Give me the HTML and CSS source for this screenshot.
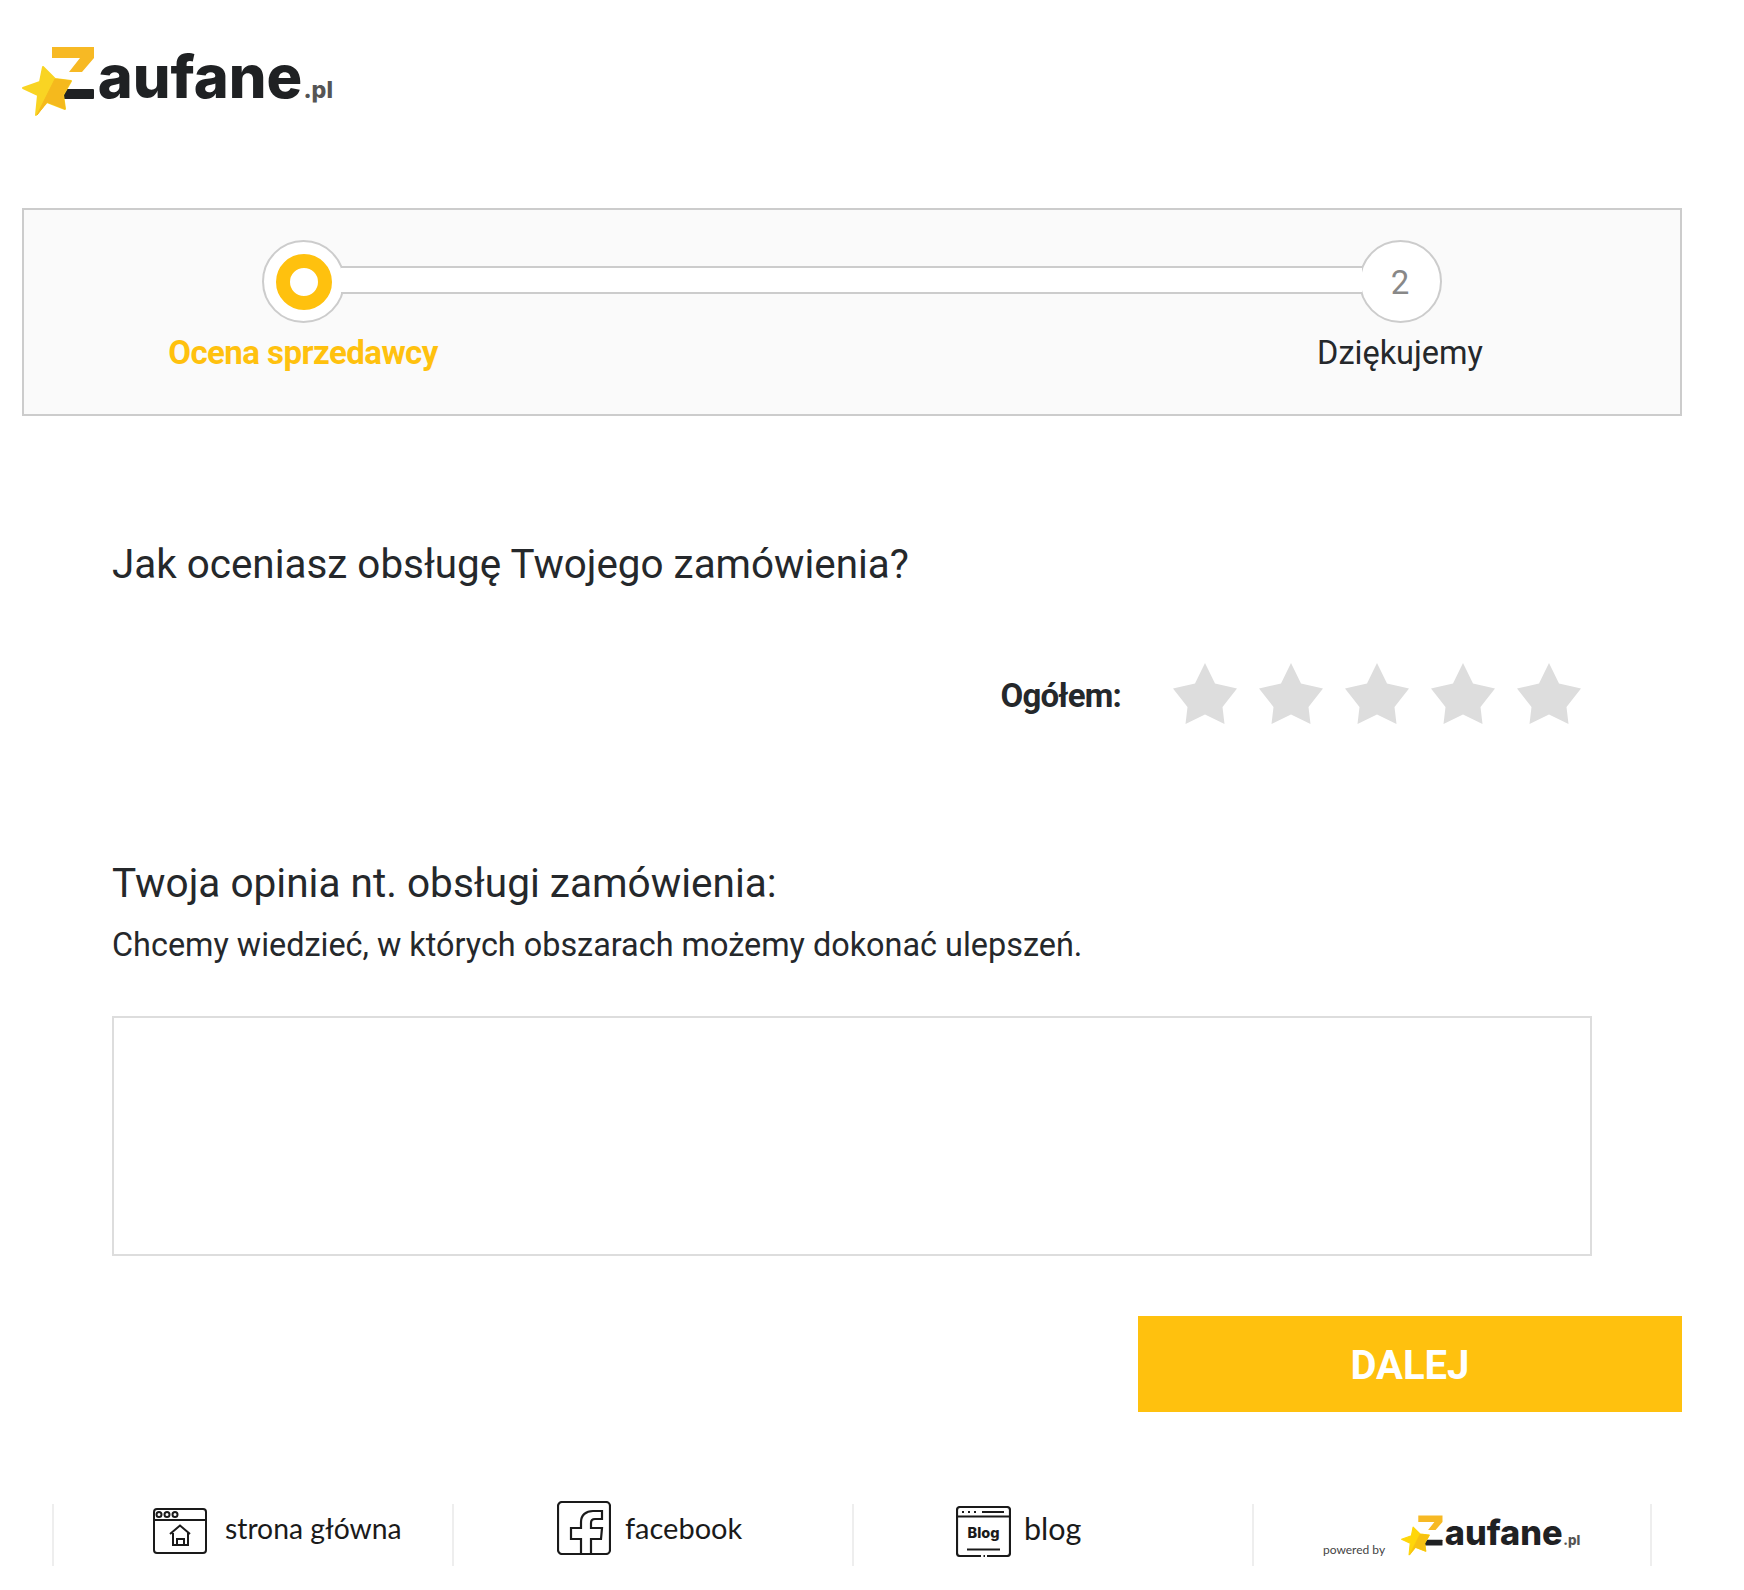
FILE: index.html
```html
<!DOCTYPE html>
<html lang="pl">
<head>
<meta charset="utf-8">
<title>Zaufane.pl</title>
<link rel="stylesheet" href="styles.css">
</head>
<body>
<div class="page">
  <header class="header">
    <a class="logo">
      <svg class="logo-mark" viewBox="0 0 74 71"><polygon fill="#f7b924" points="30,1 72,1 72,12 60,26 47,26 58,12 30,12"/><rect fill="#1f2123" x="41" y="43" width="31" height="10" rx="1"/><polygon fill="#f9d423" stroke="#f9d423" stroke-width="2" stroke-linejoin="round" points="21,21 33,33 49,35 41,49 43,63 25,56 14,69 16,49 1,42 18,36"/><polygon fill="#f5b91d" stroke="#f5b91d" stroke-width="1" stroke-linejoin="round" points="33,33 49,35 41,49 43,63 25,56 15,69"/></svg>
      <span class="logo-text">aufane<span class="logo-tld">.pl</span></span>
    </a>
  </header>

  <section class="steps">
    <div class="steps-track"></div>
    <div class="step step-active">
      <div class="step-circle"><span class="step-ring"></span></div>
      <div class="step-label">Ocena sprzedawcy</div>
    </div>
    <div class="step">
      <div class="step-circle"><span class="step-num">2</span></div>
      <div class="step-label">Dziękujemy</div>
    </div>
  </section>

  <main class="form">
    <h2 class="question">Jak oceniasz obsługę Twojego zamówienia?</h2>
    <div class="rating">
      <span class="rating-label">Ogółem:</span>
      <div class="stars">
        <svg class="star" viewBox="0 0 64 61"><polygon points="32,0 42,20.500 64,25.500 49.500,44 51.500,61 32,51.500 12.500,61 14.500,44 0,25.500 22,20.500"/></svg>
        <svg class="star" viewBox="0 0 64 61"><polygon points="32,0 42,20.500 64,25.500 49.500,44 51.500,61 32,51.500 12.500,61 14.500,44 0,25.500 22,20.500"/></svg>
        <svg class="star" viewBox="0 0 64 61"><polygon points="32,0 42,20.500 64,25.500 49.500,44 51.500,61 32,51.500 12.500,61 14.500,44 0,25.500 22,20.500"/></svg>
        <svg class="star" viewBox="0 0 64 61"><polygon points="32,0 42,20.500 64,25.500 49.500,44 51.500,61 32,51.500 12.500,61 14.500,44 0,25.500 22,20.500"/></svg>
        <svg class="star" viewBox="0 0 64 61"><polygon points="32,0 42,20.500 64,25.500 49.500,44 51.500,61 32,51.500 12.500,61 14.500,44 0,25.500 22,20.500"/></svg>
      </div>
    </div>
    <h2 class="question question-opinion">Twoja opinia nt. obsługi zamówienia:</h2>
    <p class="hint">Chcemy wiedzieć, w których obszarach możemy dokonać ulepszeń.</p>
    <textarea class="opinion"></textarea>
  </main>

  <div class="actions"><button class="next">DALEJ</button></div>

  <footer class="footer">
    <a class="foot-item foot-home">
      <svg class="foot-icon icon-home" viewBox="0 0 54 46" fill="none" stroke="#1a1a1a" stroke-width="2"><rect x="1" y="1" width="52" height="44" rx="3"/><path d="M1 12H53"/><circle cx="6" cy="6.500" r="2.500"/><circle cx="14" cy="6.500" r="2.500"/><circle cx="22" cy="6.500" r="2.500"/><path d="M17 26L27 17.500L37 26M20 25V37H35V25M24 37V31H31V37"/></svg>
      <span class="foot-text">strona główna</span>
    </a>
    <a class="foot-item">
      <svg class="foot-icon icon-fb" viewBox="0 0 54 54" fill="none" stroke="#1a1a1a" stroke-width="2.200"><rect x="1" y="1" width="52" height="52" rx="4"/><path d="M24 53V38H14V27H24V21C24 14 29 10 36 10H45V18H38C35 18 34 20 34 22V27H45L44 38H34V53"/></svg>
      <span class="foot-text">facebook</span>
    </a>
    <a class="foot-item foot-blog">
      <svg class="foot-icon icon-blog" viewBox="0 0 55 51" fill="none" stroke="#1a1a1a" stroke-width="2.200"><path d="M25 50H4Q1 50 1 47V4Q1 1 4 1H51Q54 1 54 4V47Q54 50 51 50H31M27.500 50H29M1 10.500H54M26 6H48M11 43.500H44"/><path d="M6 6H8M12 6H14M18 6H20"/><text class="blog-word" x="27.500" y="32" text-anchor="middle">Blog</text></svg>
      <span class="foot-text">blog</span>
    </a>
    <a class="foot-item foot-powered">
      <span class="powered">powered by</span>
      <span class="logo logo-small">
        <svg class="logo-mark" viewBox="0 0 74 71"><polygon fill="#f7b924" points="30,1 72,1 72,12 60,26 47,26 58,12 30,12"/><rect fill="#1f2123" x="41" y="43" width="31" height="10" rx="1"/><polygon fill="#ffd60a" stroke="#ffd60a" stroke-width="2" stroke-linejoin="round" points="21,21 33,33 49,35 41,49 43,63 25,56 14,69 16,49 1,42 18,36"/><polygon fill="#f7c112" stroke="#f7c112" stroke-width="1" stroke-linejoin="round" points="33,33 49,35 41,49 43,63 25,56 15,69"/></svg>
        <span class="logo-text">aufane<span class="logo-tld">.pl</span></span>
      </span>
    </a>
  </footer>
</div>
</body>
</html>
```
FILE: styles.css
```css
* { box-sizing: border-box; }
html, body { margin: 0; padding: 0; background: #fff; }
body { font-family: Roboto, "Liberation Sans", sans-serif; color: #25282b; }
.page { width: 1744px; height: 1590px; padding: 0 62px 0 22px; overflow: hidden; }

.header { padding-top: 46px; height: 208px; }
.logo { display: inline-flex; align-items: flex-start; font-size: 59.500px; font-family: Inter, sans-serif; color: #1f2123; }
.logo-mark { width: 1.244em; height: 1.193em; flex: none; }
.logo-text { font-weight: 800; line-height: 1; margin: 0.02em 0 0 0.03em; white-space: nowrap; }
.logo-tld { font-weight: 800; font-size: 0.39em; color: #555; margin-left: 0.05em; }
.logo-small { font-size: 34.300px; }

.steps { position: relative; display: flex; justify-content: space-between; height: 208px; padding: 30px 130px 0 129px; background: #fafafa; border: 2px solid #ccc; }
.steps-track { position: absolute; z-index: 2; top: 56px; left: 317px; right: 318px; height: 28px; background: #fff; border-top: 2px solid #ccc; border-bottom: 2px solid #ccc; }
.step { width: 300px; display: flex; flex-direction: column; align-items: center; }
.step-circle { position: relative; z-index: 1; width: 83px; height: 83px; border-radius: 50%; border: 2px solid #ccc; background: #fff; display: flex; align-items: center; justify-content: center; }
.step-ring { position: relative; z-index: 3; width: 56px; height: 56px; margin-left: 2px; border-radius: 50%; border: 14px solid #ffc10e; background: #fff; }
.step-num { position: relative; z-index: 3; font-size: 33px; color: #888; line-height: 1; padding-top: 2px; }
.step-label { margin-top: 11px; font-size: 32.500px; line-height: 38px; color: #25282b; white-space: nowrap; }
.step-active .step-label { font-size: 33px; letter-spacing: -0.55px; font-weight: 700; color: #ffc10e; }

.form { padding: 0 90px; }
.question { margin: 0; font-size: 40.400px; font-weight: 400; line-height: 46px; padding-top: 126px; }
.rating { display: flex; align-items: center; justify-content: flex-end; margin-top: 75px; padding-right: 11px; }
.rating-label { font-size: 33px; letter-spacing: -0.8px; font-weight: 700; margin-right: 52px; padding-top: 4px; }
.stars { display: flex; gap: 22px; }
.star { width: 64px; height: 61px; fill: #ddd; display: block; }
.question-opinion { padding-top: 0; margin-top: 136px; font-size: 40.550px; }
.hint { margin: 20px 0 0; font-size: 32.400px; line-height: 38px; }
.opinion { display: block; width: 100%; height: 240px; margin-top: 52px; border: 2px solid #ddd; background: #fff; resize: none; outline: none; }

.actions { display: flex; justify-content: flex-end; margin-top: 60px; }
.next { width: 544px; height: 96px; border: 0; padding: 3px 0 0; background: #ffc10e; color: #fff; font-family: Roboto, sans-serif; font-size: 40px; font-weight: 700; }

.footer { display: grid; grid-template-columns: repeat(4, 400px); margin: 92px 0 0 30px; height: 62px; width: 1600px; border-right: 2px solid #eee; }
.foot-item { display: flex; align-items: flex-start; border-left: 2px solid #eee; font-family: Lato, sans-serif; font-size: 29px; color: #1a1a1a; height: 62px; white-space: nowrap; }
.foot-text { line-height: 36px; padding-top: 6px; }
.foot-home { font-size: 28.300px; }
.foot-blog { font-size: 30.500px; }
.foot-icon { flex: none; display: block; }
.icon-home { width: 54px; height: 46px; margin: 4px 18px 0 99px; }
.icon-fb { width: 54px; height: 54px; margin: -3px 14px 0 103px; }
.icon-blog { width: 55px; height: 51px; margin: 2px 13px 0 102px; }
.blog-word { font-family: Inter, sans-serif; font-size: 14.500px; font-weight: 800; fill: #1a1a1a; stroke: none; }
.powered { font-size: 12px; color: #444; margin: 38px 16px 0 69px; line-height: 16px; }
.foot-powered .logo { margin-top: 11px; }
```
